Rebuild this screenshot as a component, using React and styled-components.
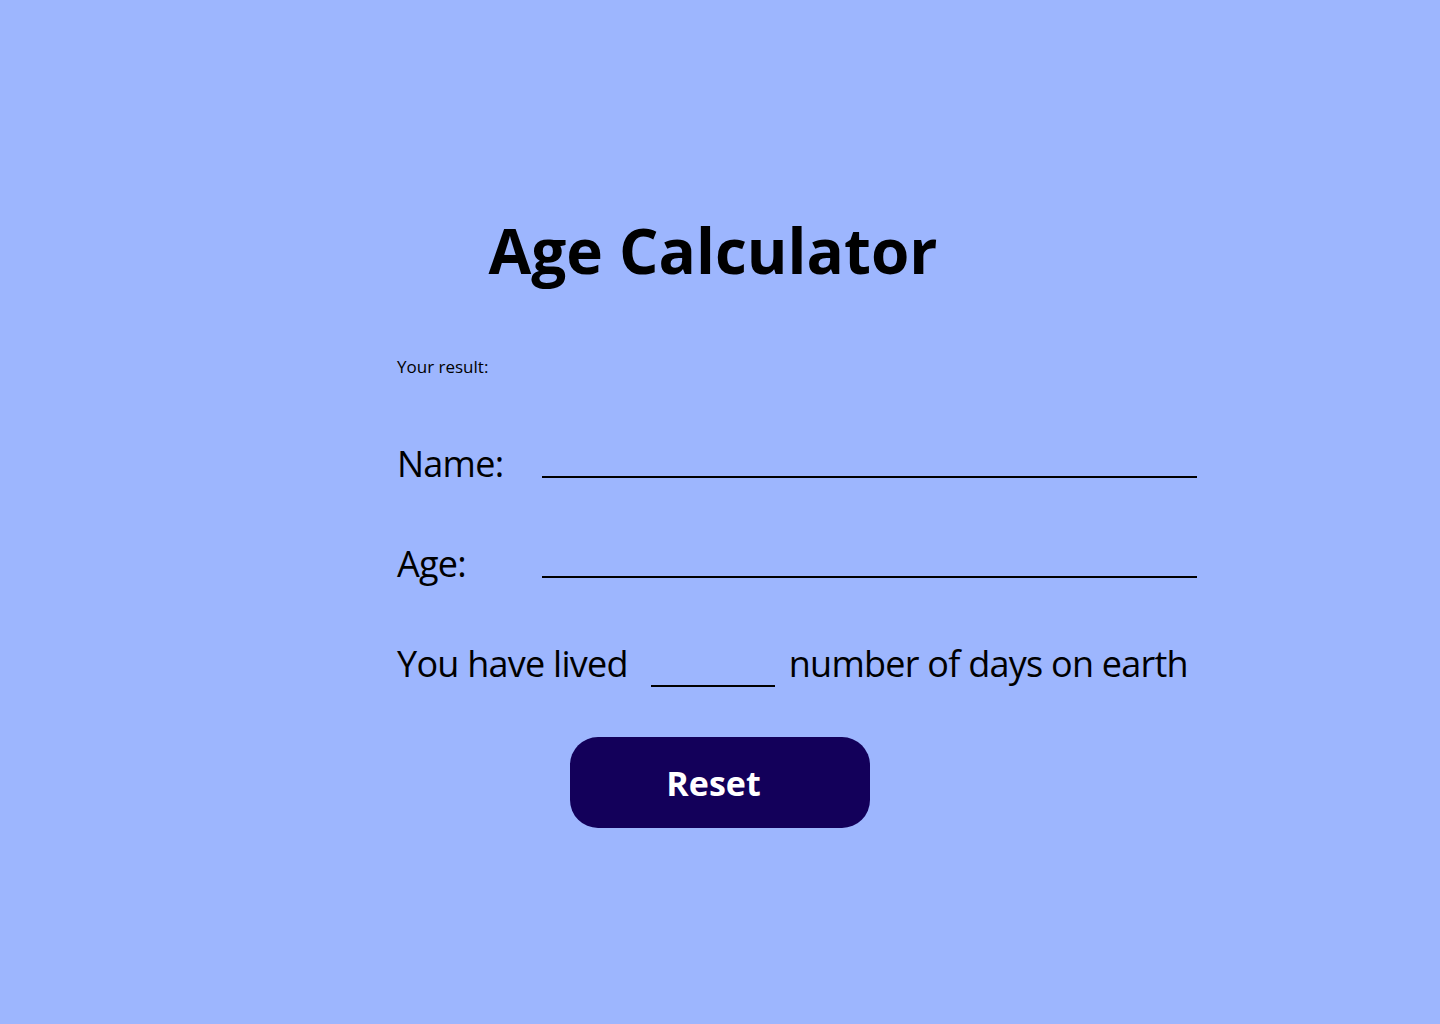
import React from 'react'
import styled, { createGlobalStyle } from 'styled-components'

const GlobalStyle = createGlobalStyle`
  html, body {
    margin: 0;
    padding: 0;
    background: #9db6fe;
  }
  body {
    font-family: "Open Sans", "Noto Sans", sans-serif;
    color: #000;
  }
`

const Page = styled.div`
  min-height: 1024px;
  display: flex;
  flex-direction: column;
  align-items: center;
  padding-top: 210px;
  box-sizing: border-box;
`

const Title = styled.h1`
  margin: 0;
  font-family: "Open Sans", sans-serif;
  font-weight: 700;
  font-size: 62px;
  line-height: 80px;
  margin-left: -14px;
`

const Form = styled.div`
  width: 820px;
  margin-top: 66px;
  display: flex;
  flex-direction: column;
  margin-left: 397px;
  align-self: flex-start;
`

const Result = styled.div`
  font-size: 17px;
  line-height: 22px;
`

const Row = styled.div`
  display: flex;
  align-items: flex-end;
  white-space: nowrap;
  margin-top: ${p => p.gap}px;
  font-family: "Open Sans", sans-serif;
  font-stretch: 88%;
  font-variation-settings: "wdth" 88;
  font-size: 36px;
  letter-spacing: -0.75px;
  line-height: 48px;
`

const Label = styled.span`
  width: 145px;
`

const Line = styled.span`
  display: block;
  flex: none;
  width: ${p => p.w}px;
  border-bottom: 2px solid #000;
  margin: 0 ${p => p.mr || 0}px ${p => p.mb}px ${p => p.ml || 0}px;
`

const Button = styled.button`
  align-self: center;
  margin-top: 49px;
  width: 300px;
  height: 91px;
  padding: 0 13px 0 0;
  border: none;
  border-radius: 28px;
  background: #13005a;
  color: #fff;
  font-family: "Open Sans", sans-serif;
  font-weight: 700;
  font-size: 34px;
  cursor: pointer;
`

export default function App() {
  return (
    <>
      <GlobalStyle />
      <Page>
        <Title>Age Calculator</Title>
        <Form>
          <Result>Your result:</Result>
          <Row gap={62}>
            <Label>Name:</Label>
            <Line w={655} mb={10} />
          </Row>
          <Row gap={52}>
            <Label>Age:</Label>
            <Line w={655} mb={10} />
          </Row>
          <Row gap={52}>
            <span>You have lived</span>
            <Line w={124} ml={23} mr={14} mb={1} />
            <span>number of days on earth</span>
          </Row>
        </Form>
        <Button>Reset</Button>
      </Page>
    </>
  )
}
